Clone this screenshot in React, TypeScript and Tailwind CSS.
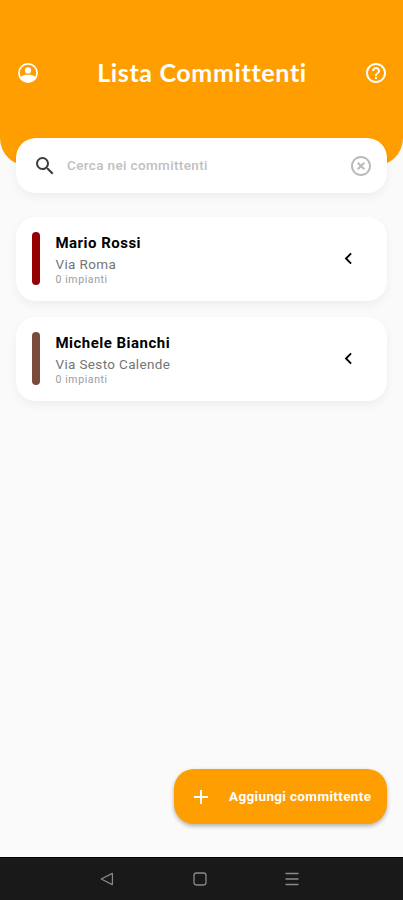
import {
  MdAdd,
  MdChevronLeft,
  MdHelpOutline,
  MdHighlightOff,
  MdSearch,
} from "react-icons/md";

type Customer = {
  name: string;
  address: string;
  plants: number;
  barClass: string;
};

const customers: Customer[] = [
  { name: "Mario Rossi", address: "Via Roma", plants: 0, barClass: "bg-[#950000]" },
  { name: "Michele Bianchi", address: "Via Sesto Calende", plants: 0, barClass: "bg-[#7a4a3b]" },
];

const AccountIcon = () => (
  <svg width="24" height="24" viewBox="0 0 24 24" fill="currentColor">
    <circle cx="12" cy="12" r="9.1" fill="none" stroke="currentColor" strokeWidth="1.7" />
    <circle cx="12" cy="9.4" r="3.1" />
    <path d="M4.4 16C6 14.4 9 13.8 12 13.8s6 .6 7.6 2.2A9.2 9.2 0 0 1 12 21.2 9.2 9.2 0 0 1 4.4 16z" />
  </svg>
);

const CustomerCard = ({ customer }: { customer: Customer }) => (
  <div className="flex h-[84px] items-center rounded-[20px] bg-white pl-4 pr-[27px] shadow-[0_4px_10px_rgba(0,0,0,0.05)]">
    <div className={`h-[53px] w-2 rounded-full ${customer.barClass}`} />
    <div className="ml-[15.5px] flex-1 pt-px">
      <p className="text-[15px] font-bold leading-[20px] tracking-[0.48px] text-black">{customer.name}</p>
      <p className="mt-[3px] text-[13.5px] leading-[17px] tracking-[0.35px] text-[#757575]">{customer.address}</p>
      <p className="text-[10.5px] leading-[13px] tracking-[0.6px] text-[#9c9c9c]">{customer.plants} impianti</p>
    </div>
    <MdChevronLeft className="text-black" size={23} />
  </div>
);

const App = () => {
  return (
    <div className="flex h-[900px] w-[403px] flex-col overflow-hidden bg-[#fafafa] font-['Roboto',sans-serif]">
      <header className="h-[166px] shrink-0 rounded-b-[28px] bg-[#ff9e00] pl-4 pr-[15px] pt-[61px] text-white">
        <div className="flex h-6 items-center justify-between">
          <AccountIcon />
          <h1 className="font-['Lato',sans-serif] text-[25px] font-bold tracking-[0.65px]">Lista Committenti</h1>
          <MdHelpOutline size={24} />
        </div>
      </header>

      <main className="-mt-7 flex flex-1 flex-col px-4">
        <div className="flex h-[55px] items-center rounded-[20px] bg-white pl-[17px] pr-[14px] shadow-[0_4px_10px_rgba(0,0,0,0.05)]">
          <MdSearch className="text-[#3c3c3c]" size={24} />
          <input
            className="ml-[10px] min-w-0 flex-1 text-[13.5px] font-medium tracking-[0.36px] outline-none placeholder:text-[#c0c0c0]"
            placeholder="Cerca nei committenti"
          />
          <MdHighlightOff className="text-[#bababa]" size={24} />
        </div>

        <div className="mt-[23.5px] flex flex-col gap-4">
          {customers.map((customer, index) => (
            <CustomerCard key={index} customer={customer} />
          ))}
        </div>

        <button className="mb-[33px] mt-auto flex h-[55px] w-[213px] items-center self-end rounded-[20px] bg-[#ff9e00] pl-[15px] text-white shadow-[0_2px_4px_rgba(0,0,0,0.3)]">
          <MdAdd size={24} />
          <span className="ml-4 whitespace-nowrap text-[13.5px] font-bold tracking-[0.35px]">Aggiungi committente</span>
        </button>
      </main>

      <nav className="flex h-[43px] shrink-0 items-center border-t border-black bg-[#191919] pl-[99px] text-[#8a8a8a]">
        <svg width="16" height="16" viewBox="0 0 16 16" fill="none" stroke="currentColor" strokeWidth="1.2" strokeLinejoin="round">
          <path d="M13.4 2.4v11.2L2.2 8z" />
        </svg>
        <svg className="ml-[77px]" width="16" height="16" viewBox="0 0 16 16" fill="none" stroke="currentColor" strokeWidth="1.3">
          <rect x="2" y="2" width="12" height="12" rx="2.4" />
        </svg>
        <svg className="ml-[76px]" width="16" height="16" viewBox="0 0 16 16" fill="none" stroke="currentColor" strokeWidth="1.4">
          <path d="M1.5 2.5h13M1.5 8h13M1.5 13.5h13" />
        </svg>
      </nav>
    </div>
  );
};

export default App;
